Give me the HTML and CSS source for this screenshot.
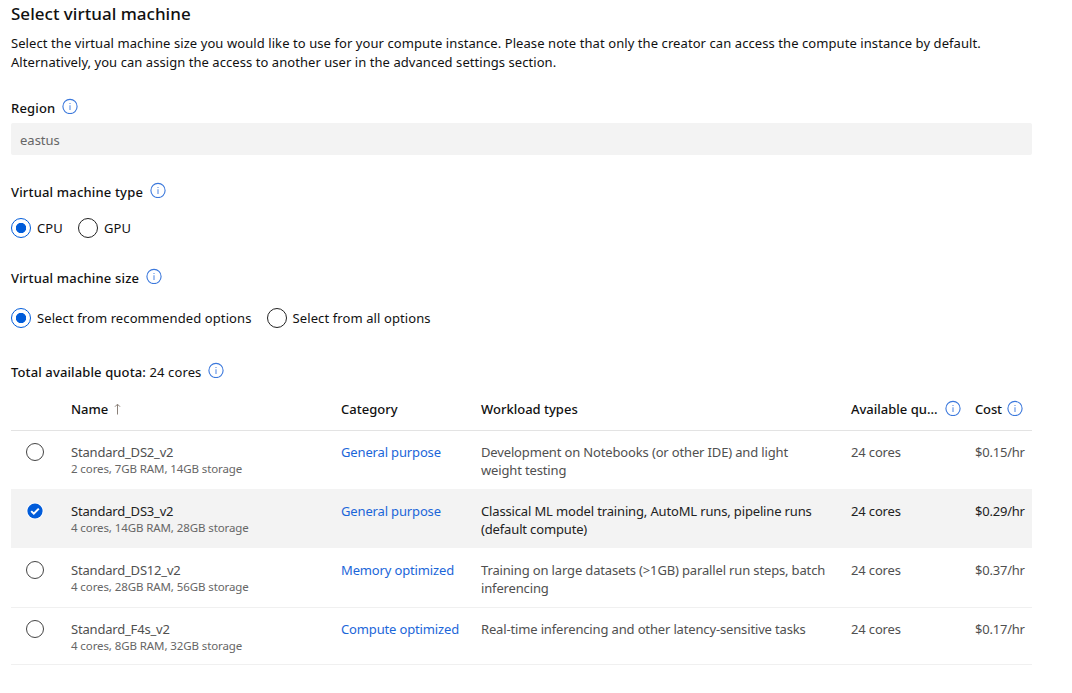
FILE: index.html
```
<!DOCTYPE html>
<html lang="en">
<head>
<meta charset="utf-8">
<title>Select virtual machine</title>
<link rel="stylesheet" href="styles.css">
</head>
<body>
<svg class="defs" aria-hidden="true">
  <symbol id="info" viewBox="0 0 16 16">
    <circle cx="8" cy="8.5" r="7.1" fill="none" stroke="#3b78dc" stroke-width="1.1"/>
    <path d="M8 7.2V12M8 4.9V6" fill="none" stroke="#5b8fe6" stroke-width="1.1"/>
  </symbol>
</svg>
<main class="panel">
  <h1 class="title">Select virtual machine</h1>
  <p class="intro">Select the virtual machine size you would like to use for your compute instance. Please note that only the creator can access the compute instance by default.<br><span class="intro-second">Alternatively, you can assign the access to another user in the advanced settings section.</span></p>

  <div class="label region-label"><span>Region</span><svg class="info"><use href="#info"/></svg></div>
  <div class="field">eastus</div>

  <div class="label type-label"><span>Virtual machine type</span><svg class="info"><use href="#info"/></svg></div>
  <div class="options type-options">
    <div class="option"><span class="radio on"></span><span>CPU</span></div>
    <div class="option"><span class="radio"></span><span>GPU</span></div>
  </div>

  <div class="label size-label"><span>Virtual machine size</span><svg class="info"><use href="#info"/></svg></div>
  <div class="options size-options">
    <div class="option"><span class="radio on"></span><span>Select from recommended options</span></div>
    <div class="option"><span class="radio"></span><span>Select from all options</span></div>
  </div>

  <div class="label quota-label"><span>Total available quota: <span class="quota-value">24 cores</span></span><svg class="info"><use href="#info"/></svg></div>

  <div class="table">
    <div class="row head">
      <div></div>
      <div class="head-cell"><span>Name</span><svg class="sort" viewBox="0 0 7 12"><path d="M3.5 11.5V1.5M1 3.7L3.5 1.2L6 3.7" fill="none" stroke="#8a8078" stroke-width="1"/></svg></div>
      <div class="head-cell">Category</div>
      <div class="head-cell">Workload types</div>
      <div class="head-cell avail"><span>Available qu...</span><svg class="info"><use href="#info"/></svg></div>
      <div class="head-cell cost"><span>Cost</span><svg class="info"><use href="#info"/></svg></div>
    </div>
    <div class="row">
      <div class="pick"><span class="ring"></span></div>
      <div><div class="name">Standard_DS2_v2</div><div class="spec">2 cores, 7GB RAM, 14GB storage</div></div>
      <div class="link">General purpose</div>
      <div class="work">Development on Notebooks (or other IDE) and light<br>weight testing</div>
      <div class="num">24 cores</div>
      <div class="price">$0.15/hr</div>
    </div>
    <div class="row selected">
      <div class="pick"><svg class="check" viewBox="0 0 18 18"><circle cx="9" cy="9" r="8.6" fill="#fff"/><circle cx="9" cy="9" r="7.6" fill="#015cda"/><path d="M5.2 9.1L7.8 11.6L12.8 6.6" fill="none" stroke="#fff" stroke-width="2"/></svg></div>
      <div><div class="name">Standard_DS3_v2</div><div class="spec">4 cores, 14GB RAM, 28GB storage</div></div>
      <div class="link">General purpose</div>
      <div class="work">Classical ML model training, AutoML runs, pipeline runs<br>(default compute)</div>
      <div class="num">24 cores</div>
      <div class="price">$0.29/hr</div>
    </div>
    <div class="row after-selected">
      <div class="pick"><span class="ring"></span></div>
      <div><div class="name">Standard_DS12_v2</div><div class="spec">4 cores, 28GB RAM, 56GB storage</div></div>
      <div class="link">Memory optimized</div>
      <div class="work">Training on large datasets (&gt;1GB) parallel run steps, batch<br>inferencing</div>
      <div class="num">24 cores</div>
      <div class="price">$0.37/hr</div>
    </div>
    <div class="row last">
      <div class="pick"><span class="ring"></span></div>
      <div><div class="name">Standard_F4s_v2</div><div class="spec">4 cores, 8GB RAM, 32GB storage</div></div>
      <div class="link">Compute optimized</div>
      <div class="work">Real-time inferencing and other latency-sensitive tasks</div>
      <div class="num">24 cores</div>
      <div class="price">$0.17/hr</div>
    </div>
  </div>
</main>
</body>
</html>
```
FILE: styles.css
```
* { box-sizing: border-box; }
body {
  margin: 0;
  background: #fff;
  color: #111;
  font: 13px/18px "Noto Sans", "Open Sans", sans-serif;
}
.defs { display: block; width: 0; height: 0; }
.panel { width: 1021px; margin-left: 11px; }
.title { margin: 0; padding-top: 2px; height: 34px; font-size: 17px; line-height: 24px; font-weight: 500; letter-spacing: 0.02px; }
.intro { margin: 0 0 26px; line-height: 19px; white-space: nowrap; letter-spacing: 0.078px; }
.intro-second { letter-spacing: 0.055px; }
.label { display: flex; height: 20px; line-height: 20px; font-weight: 500; white-space: nowrap; letter-spacing: 0.17px; }
.info { flex: none; width: 16px; height: 16px; margin-left: 7px; }
.region-label { margin-bottom: 5px; }
.field { height: 32px; padding-left: 9px; line-height: 34px; background: #f3f3f3; border-radius: 2px; color: #666; }
.type-label { margin-top: 27px; }
.type-options { margin-top: 16px; }
.size-label { margin-top: 30px; }
.size-options { margin-top: 20px; }
.quota-label { margin-top: 34px; letter-spacing: 0.12px; }
.quota-value { font-weight: 400; }
.options { display: flex; height: 20px; gap: 15px; letter-spacing: 0.1px; }
.option { display: flex; align-items: center; gap: 6px; white-space: nowrap; }
.radio { width: 20px; height: 20px; border: 1px solid #222; border-radius: 50%; }
.radio.on { border-color: #015cda; background: radial-gradient(circle, #015cda 4.8px, transparent 5.5px); }
.table { margin-top: 6px; }
.row {
  display: grid;
  grid-template-columns: 60px 270px 140px 370px 124px 57px;
  height: 59px;
  padding-top: 12px;
  border-top: 1px solid #f0f0f0;
  color: #505050;
  white-space: nowrap;
  letter-spacing: -0.15px;
}
.row.head { height: 42px; padding-top: 11px; border: 0; color: #111; font-weight: 500; letter-spacing: 0; }
.head + .row { border-top-color: #e3e3e3; }
.head-cell { display: flex; line-height: 20px; }
.head-cell .info { margin-top: 1px; }
.cost .info { margin-left: 5px; }
.cost span { letter-spacing: -0.15px; }
.sort { width: 7px; height: 12px; margin: 4px 0 0 6px; }
.row.selected { background: #f3f3f3; border-color: #f3f3f3; color: #222; }
.row.after-selected { border-top-color: #fff; }
.row.last { height: 58px; border-bottom: 1px solid #f0f0f0; }
.pick { padding-left: 15px; }
.ring { display: block; width: 18px; height: 18px; border: 1px solid #444; border-radius: 50%; }
.check { display: block; width: 18px; height: 18px; }
.name { letter-spacing: -0.19px; }
.spec { font-size: 11.5px; line-height: 16px; color: #666; letter-spacing: -0.1px; }
.link { color: #1b66d9; }
.price { letter-spacing: -0.22px; }
```
